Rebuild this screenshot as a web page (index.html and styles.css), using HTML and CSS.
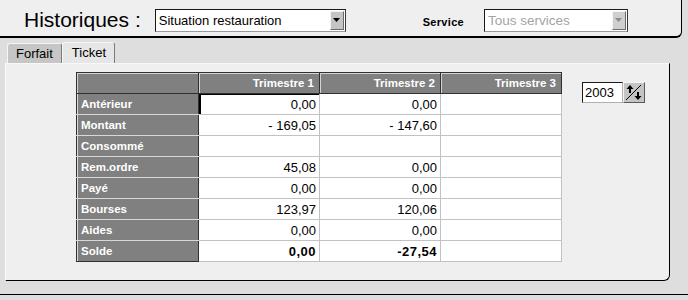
FILE: index.html
```html
<!DOCTYPE html>
<html lang="fr">
<head>
    <meta charset="UTF-8">
    <title>Historiques</title>
    <link rel="stylesheet" href="styles.css">
</head>
<body>
    <!-- Header with the two combos -->
    <div class="top">
        <h1 class="title">Historiques :</h1>
        <div class="combo combo-main">
            <span class="combo-text">Situation restauration</span>
            <span class="combo-btn">
                <svg width="7" height="4" viewBox="0 0 7 4"><path d="M0 0h7L3.5 4z" fill="#000"/></svg>
            </span>
        </div>
        <span class="service">Service</span>
        <div class="combo combo-off">
            <span class="combo-text">Tous services</span>
            <span class="combo-btn">
                <svg width="7" height="4" viewBox="0 0 7 4"><path d="M0 0h7L3.5 4z" fill="#8c8c8c"/></svg>
            </span>
        </div>
    </div>

    <div class="tabs">
        <span class="tab">Forfait</span>
        <span class="tab tab-on">Ticket</span>
    </div>

    <div class="panel">
        <table class="grid">
            <colgroup>
                <col class="c-label">
                <col class="c-num">
                <col class="c-num">
                <col class="c-num">
            </colgroup>
            <tr>
                <th class="head"></th>
                <th class="head">Trimestre 1</th>
                <th class="head">Trimestre 2</th>
                <th class="head">Trimestre 3</th>
            </tr>
            <tr><th class="lab">Antérieur</th><td class="focus">0,00</td><td>0,00</td><td></td></tr>
            <tr><th class="lab">Montant</th><td>- 169,05</td><td>- 147,60</td><td></td></tr>
            <tr><th class="lab">Consommé</th><td></td><td></td><td></td></tr>
            <tr><th class="lab">Rem.ordre</th><td>45,08</td><td>0,00</td><td></td></tr>
            <tr><th class="lab">Payé</th><td>0,00</td><td>0,00</td><td></td></tr>
            <tr><th class="lab">Bourses</th><td>123,97</td><td>120,06</td><td></td></tr>
            <tr><th class="lab">Aides</th><td>0,00</td><td>0,00</td><td></td></tr>
            <tr class="total"><th class="lab">Solde</th><td>0,00</td><td>-27,54</td><td></td></tr>
        </table>

        <!-- Year spinner -->
        <div class="spin">
            <span class="spin-field">2003</span>
            <span class="spin-btn">
                <svg width="20" height="19" viewBox="0 0 20 19">
                    <path d="M2 17L17 2" stroke="#000" stroke-width="1"/>
                    <path d="M6 2l-3.5 4h2.5v4h2V6h2.5z" fill="#000"/>
                    <path d="M14 17l3.5-4H15V9h-2v4h-2.5z" fill="#000"/>
                </svg>
            </span>
        </div>
    </div>

    <div class="band"></div>
</body>
</html>
```

FILE: styles.css
```css
body {
    margin: 0;
    width: 688px;
    height: 300px;
    overflow: hidden;
    background-color: #dedede;
    font-family: "Liberation Sans", Arial, sans-serif;
    color: #000;
}

.top {
    box-sizing: border-box;
    width: 682px;
    height: 38px;
    background: #efefef;
    border-right: 1px solid #000;
    border-bottom: 2px solid #000;
    border-bottom-right-radius: 6px;
    display: flex;
    align-items: center;
    padding: 4px 0 0 24px;
}

.title {
    margin: 0;
    font-size: 21px;
    font-weight: normal;
    line-height: 24px;
}

.combo {
    box-sizing: border-box;
    height: 23px;
    background: #fff;
    border: 1px solid;
    border-color: #1a1a1a #3a3a3a #9a9a9a #1a1a1a;
    display: flex;
    align-items: center;
    justify-content: space-between;
    padding: 0 1px 0 3px;
    font-size: 13px;
}

.combo-main {
    width: 191px;
    margin-left: 14px;
}

.combo-off {
    width: 144px;
    margin-left: 20px;
    color: #a4a4a4;
    font-size: 13.5px;
}

.combo-btn {
    box-sizing: border-box;
    width: 14px;
    height: 19px;
    background: #c4c4c4;
    border: 1px solid;
    border-color: #f4f4f4 #6a6a6a #6a6a6a #f4f4f4;
    display: flex;
    align-items: center;
    justify-content: center;
}

.combo-off .combo-btn {
    background: #cfcfcf;
}

.service {
    margin-left: 77px;
    font-size: 11px;
    font-weight: bold;
    letter-spacing: 0.3px;
    padding-top: 4px;
}

.tabs {
    display: flex;
    align-items: flex-end;
    height: 25px;
    padding-left: 7px;
}

.tab {
    box-sizing: border-box;
    height: 20px;
    padding: 0 8px 0 8px;
    font-size: 13px;
    line-height: 20px;
    background: #c6c6c6;
    border: 1px solid;
    border-bottom: none;
    border-color: #f6f6f6 #7a7a7a #7a7a7a #f6f6f6;
    border-radius: 3px 3px 0 0;
}

.tab-on {
    height: 21px;
    width: 53px;
    padding-left: 9px;
    background: #e6e6e6;
}

.panel {
    box-sizing: border-box;
    width: 665px;
    height: 218px;
    margin-left: 5px;
    background: #efefef;
    border-top: 1px solid #f8f8f8;
    border-left: 1px solid #fafafa;
    border-right: 1px solid #000;
    border-bottom: 1px solid #000;
    border-bottom-right-radius: 6px;
    display: flex;
    align-items: flex-start;
    padding: 8px 0 0 70px;
}

.grid {
    border-collapse: collapse;
    table-layout: fixed;
    width: 486px;
    font-size: 13px;
}

.c-label {
    width: 122px;
}

.c-num {
    width: 121px;
}

.grid th,
.grid td {
    height: 21px;
    padding: 0 3px 0 4px;
    box-sizing: border-box;
    white-space: nowrap;
}

.grid td {
    background: #fff;
    border: 1px solid #c2c2c2;
    text-align: right;
    line-height: 19px;
}

.grid .head {
    background: #808080;
    color: #fff;
    font-size: 11.5px;
    font-weight: bold;
    text-align: right;
    padding-right: 5px;
    border: 1px solid #303030;
    box-shadow: inset 1px 1px 0 #d4d4d4;
}

.grid .lab {
    background: #808080;
    color: #fff;
    font-size: 11.5px;
    font-weight: bold;
    text-align: left;
    border: 1px solid #303030;
    border-bottom-color: #d8d8d8;
    box-shadow: inset 1px 0 0 #dcdcdc;
}

.grid tr:last-child .lab {
    border-bottom-color: #303030;
}

.grid .focus {
    box-shadow: inset 2px 1px 0 #000;
}

.total td {
    font-weight: bold;
    letter-spacing: 0.5px;
}

.spin {
    display: flex;
    margin-left: 20px;
    margin-top: 10px;
}

.spin-field {
    box-sizing: border-box;
    width: 41px;
    height: 21px;
    background: #fff;
    border: 1px solid;
    border-color: #1a1a1a #b0b0b0 #b0b0b0 #1a1a1a;
    font-size: 13px;
    line-height: 19px;
    padding-left: 2px;
}

.spin-btn {
    box-sizing: border-box;
    width: 22px;
    height: 21px;
    background: #c4c4c4;
    border: 1px solid;
    border-color: #f4f4f4 #5a5a5a #5a5a5a #f4f4f4;
    display: flex;
}

.band {
    height: 13px;
    border-bottom: 1px solid #000;
}
```
